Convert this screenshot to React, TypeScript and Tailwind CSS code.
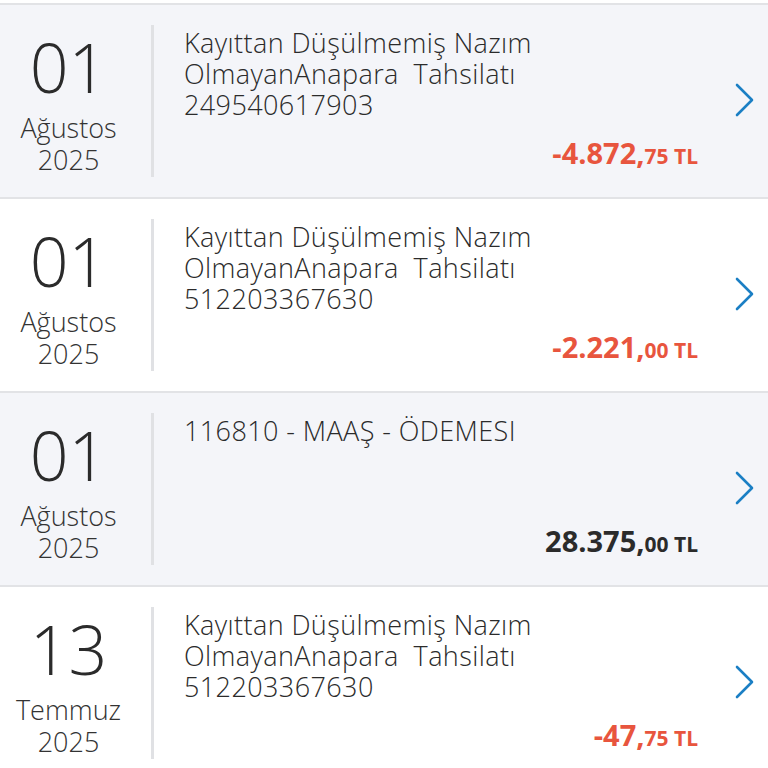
type Tx = {
  day: string;
  month: string;
  year: string;
  lines: string[];
  main: string;
  cents: string;
  negative: boolean;
  shaded: boolean;
};

const txs: Tx[] = [
  {
    day: "01",
    month: "Ağustos",
    year: "2025",
    lines: ["Kayıttan Düşülmemiş Nazım", "OlmayanAnapara\u00a0 Tahsilatı", "249540617903"],
    main: "-4.872,",
    cents: "75",
    negative: true,
    shaded: true,
  },
  {
    day: "01",
    month: "Ağustos",
    year: "2025",
    lines: ["Kayıttan Düşülmemiş Nazım", "OlmayanAnapara\u00a0 Tahsilatı", "512203367630"],
    main: "-2.221,",
    cents: "00",
    negative: true,
    shaded: false,
  },
  {
    day: "01",
    month: "Ağustos",
    year: "2025",
    lines: ["116810 - MAAŞ - ÖDEMESI"],
    main: "28.375,",
    cents: "00",
    negative: false,
    shaded: true,
  },
  {
    day: "13",
    month: "Temmuz",
    year: "2025",
    lines: ["Kayıttan Düşülmemiş Nazım", "OlmayanAnapara\u00a0 Tahsilatı", "512203367630"],
    main: "-47,",
    cents: "75",
    negative: true,
    shaded: false,
  },
];

function Chevron() {
  return (
    <svg width="22" height="36" viewBox="0 0 22 36" fill="none" className="shrink-0">
      <polyline
        points="3,3 18,18 3,33"
        stroke="#1b7fc4"
        strokeWidth="2.6"
        strokeLinecap="round"
        strokeLinejoin="round"
      />
    </svg>
  );
}

function Row({ tx }: { tx: Tx }) {
  return (
    <div
      className={`flex h-[194px] shrink-0 border-t-2 border-[#e2e3e6] ${tx.shaded ? "bg-[#f4f5f9]" : "bg-white"}`}
    >
      {/* date column */}
      <div className="flex w-[137px] shrink-0 flex-col items-center pt-[30px] text-[#2b2b2b]">
        <div className="text-[68px] font-light leading-[64px]">{tx.day}</div>
        <div className="mt-[13px] text-[27px] font-light leading-[32px] text-[#333]">{tx.month}</div>
        <div className="text-[27px] font-light leading-[32px] text-[#333]">{tx.year}</div>
      </div>

      {/* divider */}
      <div className="ml-[14px] mt-[20px] h-[152px] w-[3px] shrink-0 bg-[#e0e1e4]" />

      {/* description + amount */}
      <div className="flex flex-1 flex-col pl-[30px] pr-[36px] pt-[22px]">
        <div className="text-[27px] font-light leading-[31px] tracking-[0.4px] text-[#2b2b2b]">
          {tx.lines.map((l, i) => (
            <div key={i}>{l}</div>
          ))}
        </div>
        <div className="mt-auto mb-[23px] self-end">
          <span className={`font-bold ${tx.negative ? "text-[#e8553e]" : "text-[#2b2b2b]"}`}>
            <span className="text-[29px]">{tx.main}</span>
            <span className="text-[21px]">{tx.cents} TL</span>
          </span>
        </div>
      </div>

      {/* chevron */}
      <div className="flex w-[34px] shrink-0 items-center pb-[2px] pr-[7px]">
        <Chevron />
      </div>
    </div>
  );
}

export default function App() {
  return (
    <div
      className="flex h-[768px] w-[768px] flex-col overflow-hidden bg-white pt-[3px]"
      style={{ fontFamily: '"Open Sans", "Noto Sans", sans-serif' }}
    >
      {txs.map((tx, i) => (
        <Row key={i} tx={tx} />
      ))}
    </div>
  );
}
